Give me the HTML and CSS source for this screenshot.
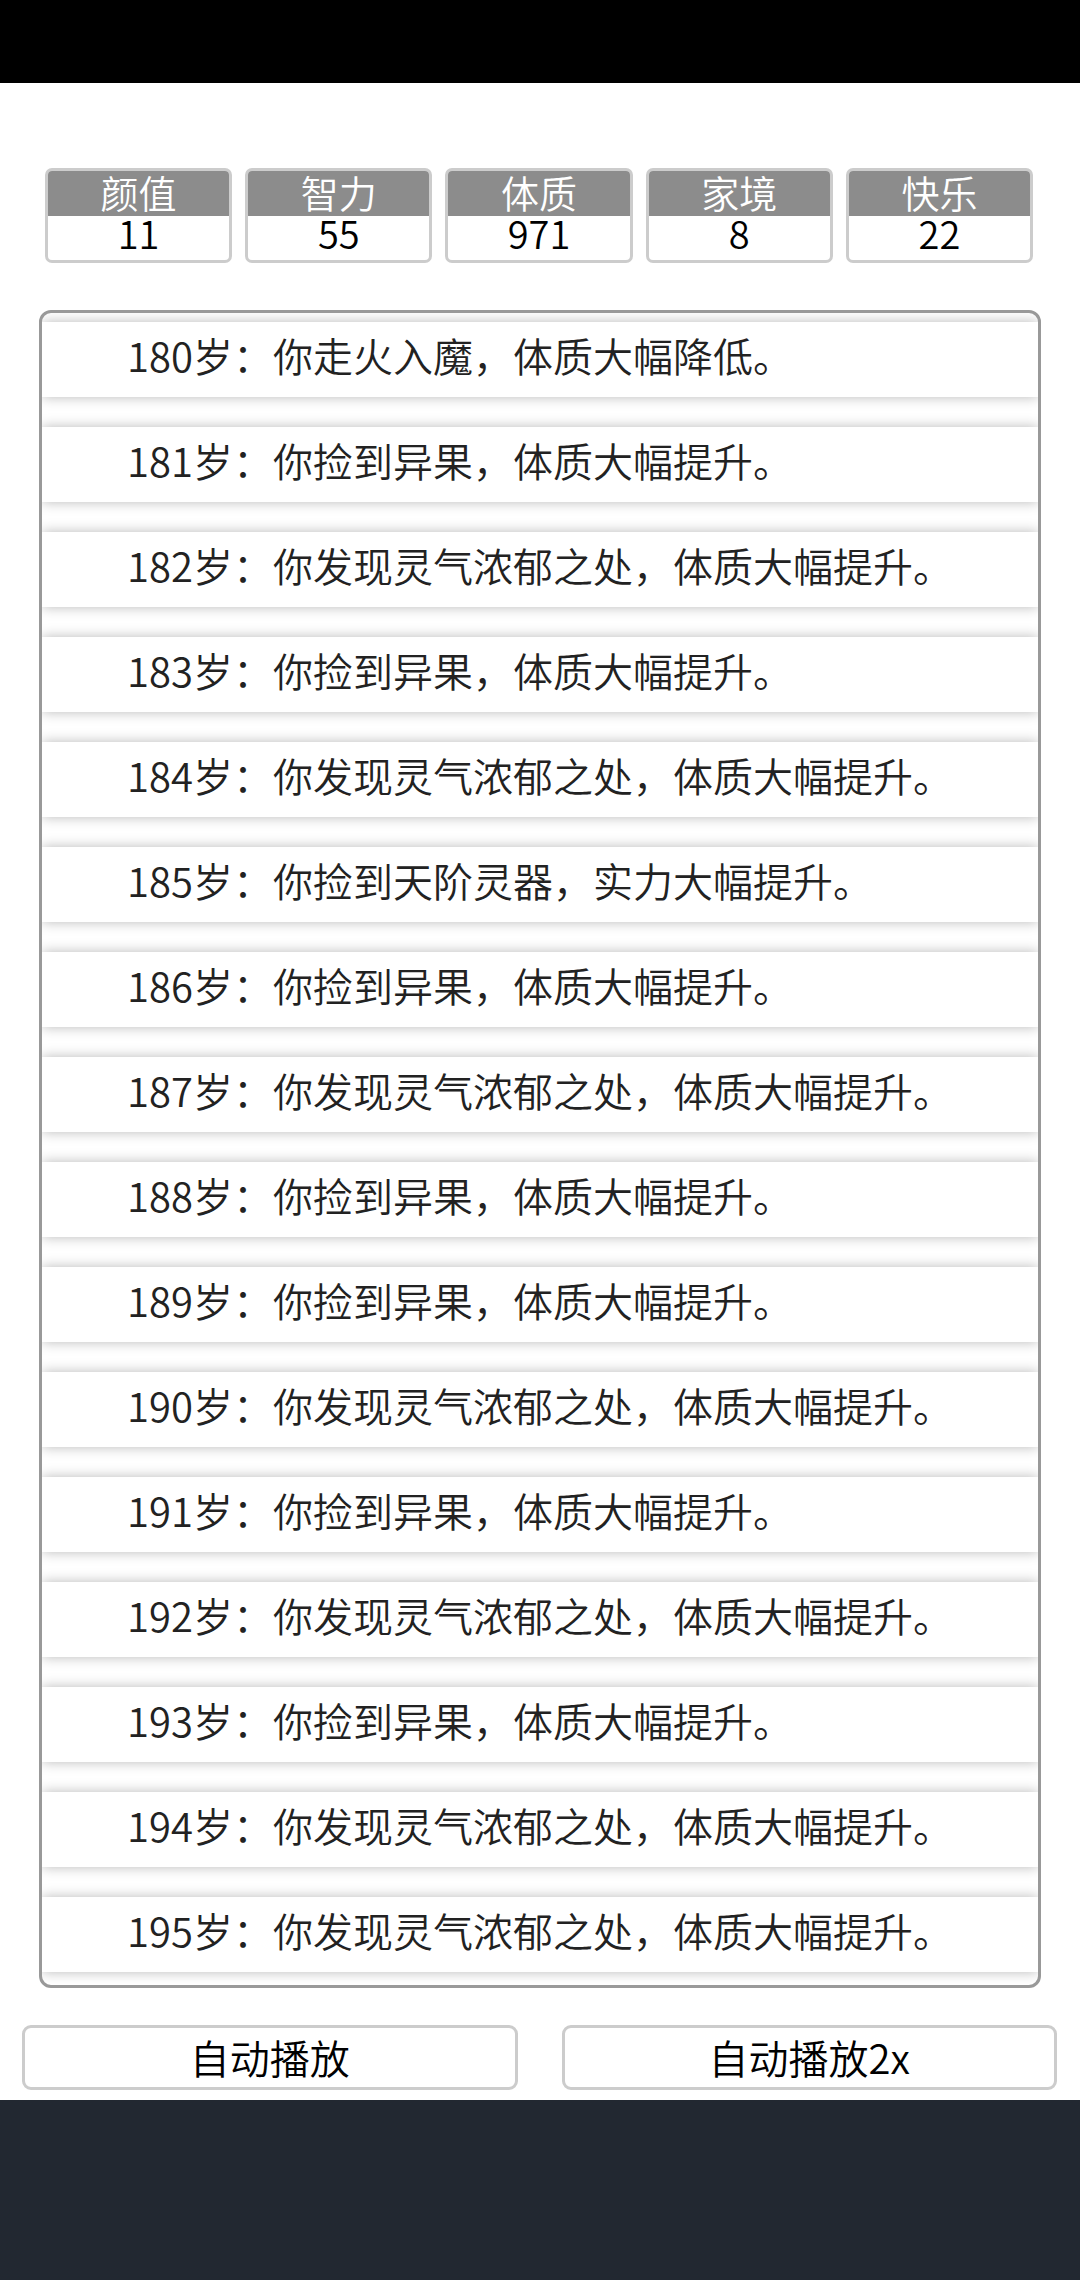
FILE: index.html
```html
<!DOCTYPE html>
<html lang="zh-CN">
<head>
<meta charset="utf-8">
<title>人生重开</title>
<link rel="stylesheet" href="styles.css">
</head>
<body>
<div class="page">
  <div class="statusbar"></div>
  <div class="stats">
    <div class="stat"><div class="stat-name">颜值</div><div class="stat-value">11</div></div>
    <div class="stat"><div class="stat-name">智力</div><div class="stat-value">55</div></div>
    <div class="stat"><div class="stat-name">体质</div><div class="stat-value">971</div></div>
    <div class="stat"><div class="stat-name">家境</div><div class="stat-value">8</div></div>
    <div class="stat"><div class="stat-name">快乐</div><div class="stat-value">22</div></div>
  </div>
  <ul class="log">
    <li class="entry"><span class="age">180岁：</span><span class="event">你走火入魔，体质大幅降低。</span></li>
    <li class="entry"><span class="age">181岁：</span><span class="event">你捡到异果，体质大幅提升。</span></li>
    <li class="entry"><span class="age">182岁：</span><span class="event">你发现灵气浓郁之处，体质大幅提升。</span></li>
    <li class="entry"><span class="age">183岁：</span><span class="event">你捡到异果，体质大幅提升。</span></li>
    <li class="entry"><span class="age">184岁：</span><span class="event">你发现灵气浓郁之处，体质大幅提升。</span></li>
    <li class="entry"><span class="age">185岁：</span><span class="event">你捡到天阶灵器，实力大幅提升。</span></li>
    <li class="entry"><span class="age">186岁：</span><span class="event">你捡到异果，体质大幅提升。</span></li>
    <li class="entry"><span class="age">187岁：</span><span class="event">你发现灵气浓郁之处，体质大幅提升。</span></li>
    <li class="entry"><span class="age">188岁：</span><span class="event">你捡到异果，体质大幅提升。</span></li>
    <li class="entry"><span class="age">189岁：</span><span class="event">你捡到异果，体质大幅提升。</span></li>
    <li class="entry"><span class="age">190岁：</span><span class="event">你发现灵气浓郁之处，体质大幅提升。</span></li>
    <li class="entry"><span class="age">191岁：</span><span class="event">你捡到异果，体质大幅提升。</span></li>
    <li class="entry"><span class="age">192岁：</span><span class="event">你发现灵气浓郁之处，体质大幅提升。</span></li>
    <li class="entry"><span class="age">193岁：</span><span class="event">你捡到异果，体质大幅提升。</span></li>
    <li class="entry"><span class="age">194岁：</span><span class="event">你发现灵气浓郁之处，体质大幅提升。</span></li>
    <li class="entry"><span class="age">195岁：</span><span class="event">你发现灵气浓郁之处，体质大幅提升。</span></li>
  </ul>
  <div class="controls">
    <button class="btn">自动播放</button>
    <button class="btn">自动播放2x</button>
  </div>
  <div class="navbar"></div>
</div>
</body>
</html>
```
FILE: styles.css
```css
* {
  box-sizing: border-box;
}

html, body {
  margin: 0;
  padding: 0;
  background: #ffffff;
}

body {
  font-family: "Noto Sans CJK SC", "Noto Sans", sans-serif;
  color: #222222;
}

.page {
  width: 1080px;
  height: 2280px;
  display: flex;
  flex-direction: column;
  overflow: hidden;
}

.statusbar {
  height: 83px;
  flex: none;
  background: #000000;
}

.stats {
  display: grid;
  grid-template-columns: repeat(5, 1fr);
  column-gap: 13px;
  margin-top: 85px;
  padding: 0 47px 0 45px;
}

.stat {
  height: 95px;
  border: 3px solid #cccccc;
  border-radius: 7px;
  overflow: hidden;
  text-align: center;
  background: #ffffff;
}

.stat-name {
  height: 45px;
  line-height: 41px;
  background: #8c8c8c;
  color: #ffffff;
  font-size: 38px;
  font-weight: 350;
}

.stat-value {
  height: 44px;
  line-height: 34px;
  color: #000000;
  font-size: 38px;
  font-weight: 350;
}

.log {
  list-style: none;
  margin: 47px 39px 0 39px;
  padding: 9px 0 13px 0;
  border: 3px solid #999999;
  border-radius: 12px;
  overflow: hidden;
  display: flex;
  flex-direction: column;
  gap: 30px;
}

.entry {
  height: 75px;
  display: flex;
  align-items: center;
  padding-bottom: 10px;
  background: #ffffff;
  box-shadow: 0 0 12px rgba(0, 0, 0, 0.28);
  font-size: 40px;
  font-weight: 350;
  color: #222222;
  white-space: nowrap;
}

.age {
  width: 231px;
  flex: none;
  text-align: right;
}

.controls {
  display: flex;
  gap: 44px;
  margin-top: 37px;
  padding: 0 23px 0 22px;
}

.btn {
  flex: 1;
  height: 65px;
  border: 3px solid #cccccc;
  border-radius: 9px;
  background: #ffffff;
  font-family: "Noto Sans CJK SC", "Noto Sans", sans-serif;
  font-size: 40px;
  font-weight: 350;
  color: #000000;
  padding: 0 0 12px 0;
}

.navbar {
  margin-top: 10px;
  flex: 1;
  background: #222831;
}
```
